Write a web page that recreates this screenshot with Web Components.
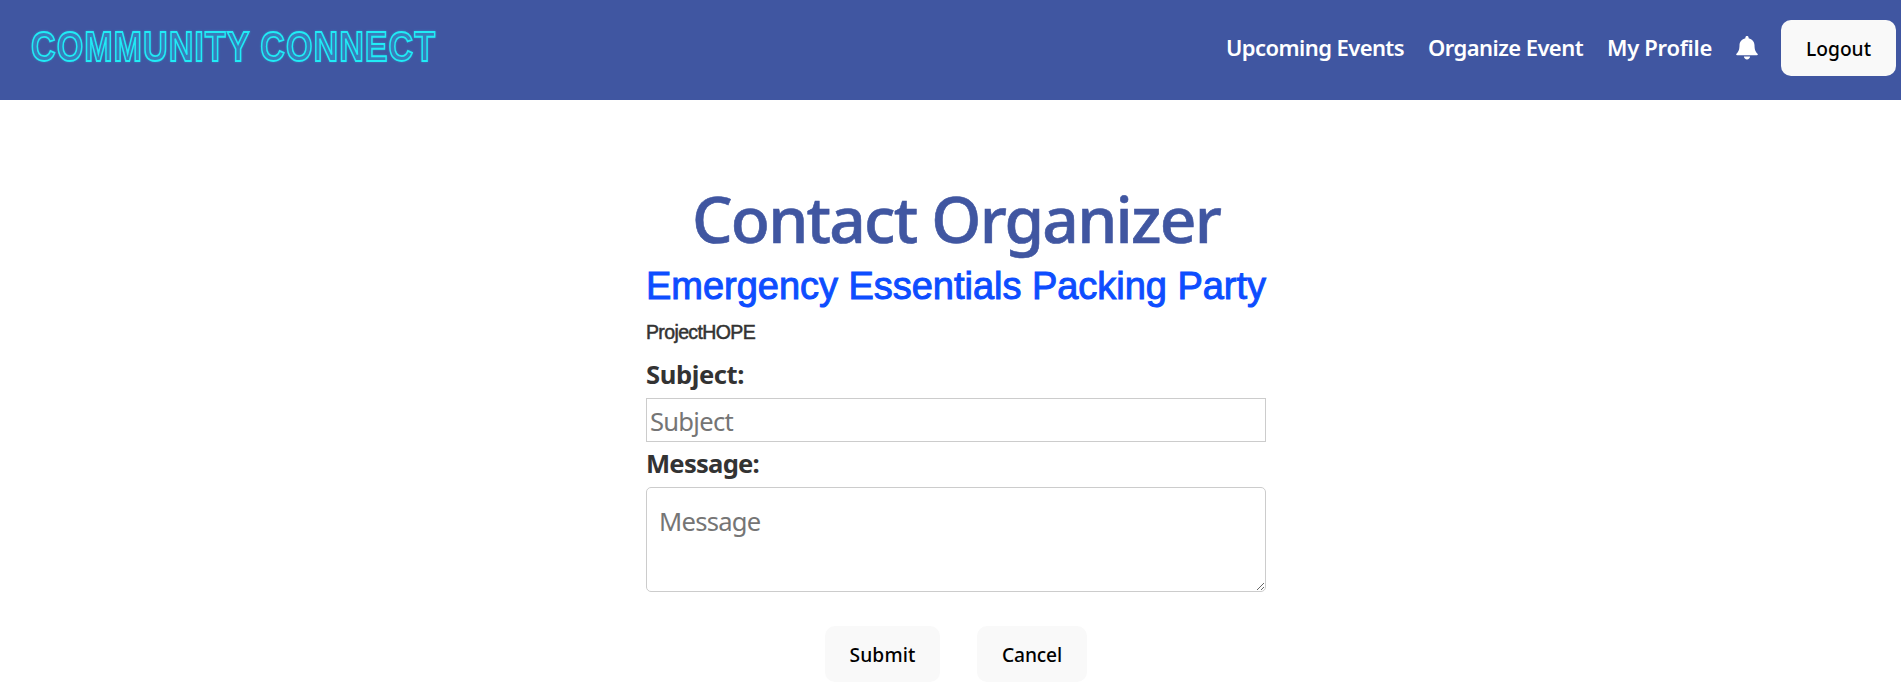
<!DOCTYPE html>
<html lang="en">
<head>
<meta charset="utf-8">
<title>Community Connect</title>
<style>
body{margin:0;background:#fff;font-family:"Noto Sans","Open Sans",sans-serif;overflow:hidden}
</style>
</head>
<body>
<community-app></community-app>
<script>
const define = (name, html, setup) => customElements.define(name, class extends HTMLElement {
  connectedCallback() {
    if (this.shadowRoot) return;
    const t = document.createElement('template');
    t.innerHTML = html;
    this.attachShadow({mode: 'open'}).append(t.content.cloneNode(true));
    if (setup) setup(this);
  }
});

/* Text tracked so that it fills the given advance width. */
define('fit-text', `<style>:host{display:block;white-space:nowrap}span{display:inline-block}</style><span><slot></slot></span>`, el => {
  const target = +el.getAttribute('width');
  const span = el.shadowRoot.querySelector('span');
  const natural = span.getBoundingClientRect().width;
  el.style.width = target + 'px';
  el.style.letterSpacing = (target - natural) / el.textContent.length + 'px';
});

define('neon-logo', `<style>:host{display:block;width:440px;height:100px}svg{display:block;overflow:visible}
text{font:700 42.5px "Liberation Sans",sans-serif;fill:#3a7cba;stroke:#20ecf6;stroke-width:1.8px;filter:drop-shadow(0 0 1px #20d8f070)}</style>
<svg width="440" height="100"><text transform="translate(31 60.8) scale(.8 1)" x="0" y="0" textLength="505">COMMUNITY CONNECT</text></svg>`);

define('bell-icon', `<style>:host{display:block;width:22px;height:24px}svg{display:block}</style>
<svg width="22" height="24" viewBox="0 0 22 24" fill="#fff"><path d="M11 0c-1 0-1.6.7-1.6 1.6v.6C5.8 3 3.6 5.800 3.500 9.300c-.1 4.600-1 6.400-3 8.400-.7.8-.3 1.600.7 1.600h19.600c1 0 1.400-.8.7-1.600-2-2-2.900-3.800-3-8.400-.1-3.500-2.300-6.300-5.900-7.100v-.6C12.600.700 12 0 11 0zM7.900 20.500c.2 1.700 1.500 2.900 3.100 2.900s2.900-1.200 3.100-2.900z"/></svg>`);

define('app-button', `<style>:host{display:block}button{width:100%;height:56px;display:flex;align-items:center;justify-content:center;padding:2px 0 0;border:0;border-radius:10px;background:#f9f9f9;color:#000;font:500 19.2px/26px "Noto Sans","Open Sans",sans-serif}</style>
<button><slot></slot></button>`);

define('site-header', `<style>
:host{display:flex;justify-content:space-between;box-sizing:border-box;height:100px;background:#4056a1;color:#fff}
nav{display:flex;align-items:flex-start;padding:20px 5px 0 0}
fit-text.n{font-weight:600;font-size:22px;line-height:30px;margin:12px 24px 0 0}
bell-icon{margin:16px 23px 0 0}
app-button{width:115px}
</style>
<neon-logo></neon-logo>
<nav><fit-text class="n" width="178">Upcoming Events</fit-text><fit-text class="n" width="155">Organize Event</fit-text><fit-text class="n" width="105">My Profile</fit-text><bell-icon></bell-icon><app-button><fit-text width="65">Logout</fit-text></app-button></nav>`);

define('form-field', `<style>
:host{display:block}
label{display:block;font-weight:700;font-size:25.6px;line-height:36px;color:#333}
::slotted(input),::slotted(textarea){margin-top:5px!important}
</style><label><slot name="label"></slot></label><slot></slot>`);

define('contact-form', `<style>
:host{display:block;width:620px;padding:81px 0 0 646px}
h1,h2,p{margin:0;font-weight:500}
h1{display:flex;justify-content:center;font-size:64px;line-height:76px;color:#4056a1;-webkit-text-stroke:.6px #4056a1}
h2{margin-top:6px;font:400 38px/46px "Liberation Sans",sans-serif;color:#0d4dff;-webkit-text-stroke:1px #0d4dff}
p{margin-top:11px;font:400 19.5px/24px "Liberation Sans",sans-serif;color:#333;-webkit-text-stroke:.5px #333}
form-field{margin-top:13px}
form-field+form-field{margin-top:4px}
input,textarea{display:block;box-sizing:border-box;width:620px;border:1px solid #ccc;background:#fff;font:400 25.600px/36px "Noto Sans","Open Sans",sans-serif;outline:0}
input{height:44px;padding:3px 3px 0}
textarea{height:105px;padding:16px 12px;border-radius:5px}
::placeholder{color:#757575;letter-spacing:-.75px}
.actions{display:flex;justify-content:center;gap:37px;margin-top:34px}
</style>
<h1><fit-text width="528">Contact Organizer</fit-text></h1>
<h2><fit-text width="620">Emergency Essentials Packing Party</fit-text></h2>
<p><fit-text width="109">ProjectHOPE</fit-text></p>
<form-field><fit-text slot="label" width="98">Subject:</fit-text><input placeholder="Subject"></form-field>
<form-field><fit-text slot="label" width="113">Message:</fit-text><textarea placeholder="Message"></textarea></form-field>
<div class="actions"><app-button style="width:115px"><fit-text width="66">Submit</fit-text></app-button><app-button style="width:110px"><fit-text width="60">Cancel</fit-text></app-button></div>`);

define('community-app', `<style>:host{display:block;height:693px;overflow:hidden}</style><site-header></site-header><contact-form></contact-form>`);
</script>
</body>
</html>
